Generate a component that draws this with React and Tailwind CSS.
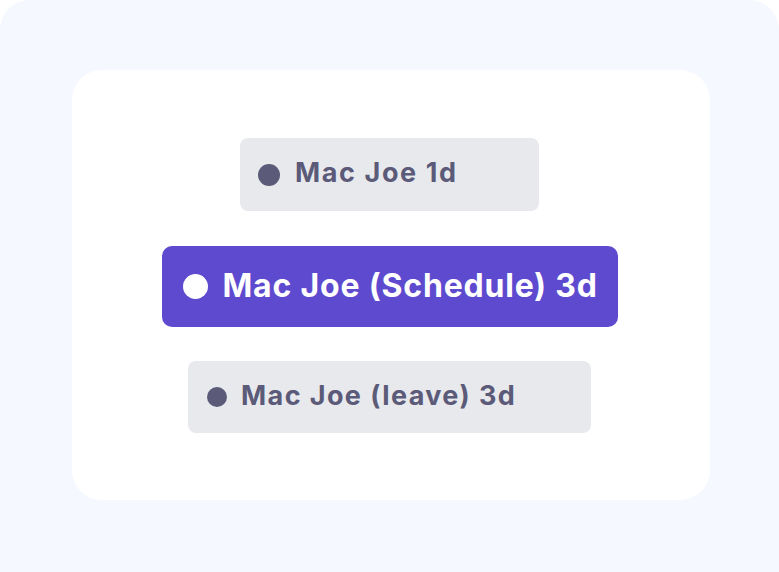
export default function App() {
  return (
    <div className="h-[572px] w-[779px] bg-white font-['Inter',sans-serif]">
      <div className="h-full rounded-t-[30px] bg-[#F5F8FE] pl-[72px] pr-[69px] pt-[70px]">
        <div className="flex h-[430px] flex-col items-center rounded-[30px] bg-white pr-[3px] pt-[68px]">
          <div className="flex h-[73px] w-[299px] items-center gap-[15px] rounded-[8px] bg-[#E8E9ED] pb-[2px] pl-[18px] text-[27px] font-bold tracking-[1.6px] text-[#5B5A78]">
            <span className="mt-[2px] h-[22px] w-[22px] rounded-full bg-[#5B5A78]" />
            Mac Joe 1d
          </div>
          <div className="mt-[35px] flex h-[81px] w-[456px] items-center gap-[15px] rounded-[10px] bg-[#5E4ACF] pb-[2px] pl-[21px] text-[32px] font-bold tracking-[0.8px] text-white">
            <span className="mt-[2px] h-[25px] w-[25px] rounded-full bg-white" />
            Mac Joe (Schedule) 3d
          </div>
          <div className="mt-[34px] flex h-[72px] w-[403px] items-center gap-[14px] rounded-[8px] bg-[#E8E9ED] pb-[2px] pl-[19px] text-[27px] font-bold tracking-[1.4px] text-[#5B5A78]">
            <span className="mt-[2px] h-[20px] w-[20px] rounded-full bg-[#5B5A78]" />
            Mac Joe (leave) 3d
          </div>
        </div>
      </div>
    </div>
  );
}
